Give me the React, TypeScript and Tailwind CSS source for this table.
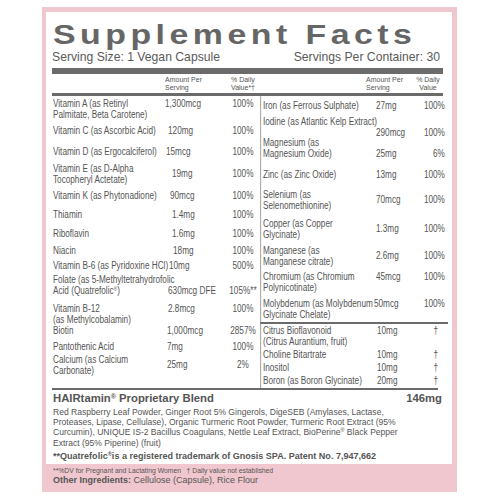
import React from 'react';

// supplement label, two column facts table
const sans = 'font-[Liberation_Sans,Arial,sans-serif]';

interface Row {
    name: React.ReactNode;
    amt: string;
    dv: React.ReactNode;
    h: string;
    al: string;
    ax: string;
}

const reg = <sup className="text-[6px]">®</sup>;

// NOTE: table body is drawn at 1/0.82 width then squeezed, label type is condensed
const leftRows: Row[] = [
    { name: <>Vitamin A (as Retinyl<br />Palmitate, Beta Carotene)</>, amt: '1,300mcg', dv: '100%', h: 'h-[27px]', al: 'self-start', ax: 'pl-0' },
    { name: 'Vitamin C (as Ascorbic Acid)', amt: '120mg', dv: '100%', h: 'h-[21px]', al: 'self-start', ax: 'pl-[3.7px]' },
    { name: 'Vitamin D (as Ergocalciferol)', amt: '15mcg', dv: '100%', h: 'h-[17px]', al: 'self-start', ax: 'pl-[1.2px]' },
    { name: <>Vitamin E (as D-Alpha<br />Tocopheryl Actetate)</>, amt: '19mg', dv: '100%', h: 'h-[27px]', al: 'self-center', ax: 'pl-[8.5px]' },
    { name: 'Vitamin K (as Phytonadione)', amt: '90mcg', dv: '100%', h: 'h-[19px]', al: 'self-start', ax: 'pl-[6.1px]' },
    { name: 'Thiamin', amt: '1.4mg', dv: '100%', h: 'h-[19px]', al: 'self-start', ax: 'pl-[8.5px]' },
    { name: 'Riboflavin', amt: '1.6mg', dv: '100%', h: 'h-[17px]', al: 'self-start', ax: 'pl-[8.5px]' },
    { name: 'Niacin', amt: '18mg', dv: '100%', h: 'h-[15px]', al: 'self-start', ax: 'pl-[9.8px]' },
    { name: 'Vitamin B-6 (as Pyridoxine HCl)', amt: '10mg', dv: '500%', h: 'h-[14px]', al: 'self-start', ax: 'pl-[4.9px]' },
    { name: <>Folate (as 5-Methyltetrahydrofolic<br />Acid (Quatrefolic{reg})</>, amt: '630mcg DFE', dv: <>105%**</>, h: 'h-[29px]', al: 'self-end', ax: 'pl-[3.7px]' },
    { name: <>Vitamin B-12<br />(as Methylcobalamin)</>, amt: '2.8mcg', dv: '100%', h: 'h-[22px]', al: 'self-start', ax: 'pl-[3.7px]' },
    { name: 'Biotin', amt: '1,000mcg', dv: '2857%', h: 'h-[16px]', al: 'self-start', ax: 'pl-[2.4px]' },
    { name: 'Pantothenic Acid', amt: '7mg', dv: '100%', h: 'h-[13px]', al: 'self-start', ax: 'pl-[2.4px]' },
    { name: <>Calcium (as Calcium<br />Carbonate)</>, amt: '25mg', dv: '2%', h: 'h-[24px]', al: 'self-center', ax: 'pl-[2.4px]' },
];

const rightTop: Row[] = [
    { name: 'Iron (as Ferrous Sulphate)', amt: '27mg', dv: '100%', h: 'h-[16px]', al: 'self-start', ax: 'pl-0' },
    { name: <>Iodine (as Atlantic Kelp Extract)<br />&nbsp;</>, amt: '290mcg', dv: '100%', h: 'h-[21px]', al: 'self-end', ax: 'pl-0' },
    { name: <>Magnesium (as<br />Magnesium Oxide)</>, amt: '25mg', dv: '6%', h: 'h-[32px]', al: 'self-end', ax: 'pl-0' },
    { name: 'Zinc (as Zinc Oxide)', amt: '13mg', dv: '100%', h: 'h-[20px]', al: 'self-start', ax: 'pl-0' },
    { name: <>Selenium (as<br />Selenomethionine)</>, amt: '70mcg', dv: '100%', h: 'h-[29px]', al: 'self-center', ax: 'pl-0' },
    { name: <>Copper (as Copper<br />Glycinate)</>, amt: '1.3mg', dv: '100%', h: 'h-[27px]', al: 'self-center', ax: 'pl-0' },
    { name: <>Manganese (as<br />Manganese citrate)</>, amt: '2.6mg', dv: '100%', h: 'h-[26px]', al: 'self-center', ax: 'pl-0' },
    { name: <>Chromium (as Chromium<br />Polynicotinate)</>, amt: '45mcg', dv: '100%', h: 'h-[27px]', al: 'self-start', ax: 'pl-0' },
    { name: <>Molybdenum (as Molybdenum<br />Glycinate Chelate)</>, amt: '50mcg', dv: '100%', h: 'h-[23px]', al: 'self-start', ax: '-ml-[2.4px]' },
];

const rightBottom: Row[] = [
    { name: <>Citrus Bioflavonoid<br />(Citrus Aurantium, fruit)</>, amt: '10mg', dv: '†', h: 'h-[24px]', al: 'self-start', ax: 'pl-[1.2px]' },
    { name: 'Choline Bitartrate', amt: '10mg', dv: '†', h: 'h-[13px]', al: 'self-start', ax: 'pl-[1.2px]' },
    { name: 'Inositol', amt: '10mg', dv: '†', h: 'h-[13px]', al: 'self-start', ax: 'pl-[1.2px]' },
    { name: 'Boron (as Boron Glycinate)', amt: '20mg', dv: '†', h: 'h-[12px]', al: 'self-start', ax: 'pl-[1.2px]' },
];

function LeftRow({ r }: { r: Row }) {
    return (
        <div className={r.h}>
            <div className="grid grid-cols-[136.6px_74.4px_41.5px]">
                <div className="whitespace-nowrap">{r.name}</div>
                <div className={`${r.al} ${r.ax} whitespace-nowrap`}>{r.amt}</div>
                <div className={`${r.al} text-center whitespace-nowrap`}>{r.dv}</div>
            </div>
        </div>
    );
}

function RightRow({ r }: { r: Row }) {
    const dagger = r.dv === '†';
    return (
        <div className={r.h}>
            <div className="grid grid-cols-[137.8px_48.8px_32.9px]">
                <div className="whitespace-nowrap">{r.name}</div>
                <div className={`${r.al} ${r.ax} whitespace-nowrap`}>{r.amt}</div>
                <div className={`${r.al} text-right whitespace-nowrap ${dagger ? 'pr-[6px]' : '-mr-[2.4px]'}`}>{r.dv}</div>
            </div>
        </div>
    );
}

function App() {
    return (
        <div className={`w-[500px] h-[500px] overflow-hidden bg-white pt-[7px] pl-[42px] ${sans} text-[#555]`}>
            <div className="w-[415px] h-[485px] bg-[#f1c7cf] pt-[5px] pl-[4px]">
                <div className="w-[406px] h-[452px] bg-white pl-[6px] pr-[9px] pt-[4px]">
                    {/* title */}
                    <div className="h-[33px] pt-[5px] text-[28px] leading-[28px] font-bold text-[#666] whitespace-nowrap">
                        <span className="inline-block ml-[1px] origin-left scale-x-[1.21] tracking-[3.7px]">Supplement Facts</span>
                    </div>
                    <div className="mt-[1px] h-[14px] flex justify-between text-[12.2px] leading-[14px] pr-[3px] text-[#5a5a5a]">
                        <span>Serving Size: 1 Vegan Capsule</span>
                        <span>Servings Per Container: 30</span>
                    </div>
                    <div className="mt-[4px] h-[6px] bg-[#6b6b6b]" />
                    <div className="h-[18.5px] flex pt-[2px] text-[7px] leading-[7.5px] whitespace-nowrap">
                        <div className="w-[113px]" />
                        <div className="w-[66px]">Amount Per<br />Serving</div>
                        <div className="w-[29px]">% Daily<br />Value*†</div>
                        <div className="w-[106px]" />
                        <div className="w-[47px]">Amount Per<br />Serving</div>
                        <div className="w-[30px] text-center">% Daily<br />Value</div>
                    </div>
                    <div className="h-[3.5px] bg-[#6b6b6b]" />
                    {/* table body */}
                    <div className="h-[292px] w-[391px]">
                        <div className="w-[476.8px] h-full origin-left scale-x-[0.82] flex text-[10px] leading-[10.5px]">
                            <div className="w-[253.7px] pl-[1.2px] pt-[3px] flex flex-col">
                                {leftRows.map((r, i) => <LeftRow key={i} r={r} />)}
                            </div>
                            <div className="w-[223.1px] border-l border-[#8d8d8d] pl-[2.6px] pt-[5px] flex flex-col">
                                {rightTop.map((r, i) => <RightRow key={i} r={r} />)}
                                <div className="h-[2px] bg-[#6b6b6b] -ml-[3.6px] -mr-[6px]" />
                                <div className="mt-[2px]">
                                    {rightBottom.map((r, i) => <RightRow key={i} r={r} />)}
                                </div>
                            </div>
                        </div>
                    </div>
                    <div className="h-[2px] bg-[#6b6b6b] mr-[5px]" />
                    {/* blend */}
                    <div className="mt-[2px] h-[13px] flex justify-between text-[11.3px] leading-[13px] font-bold pl-[1px] pr-[1px]">
                        <span>HAIRtamin<sup className="text-[7px]">®</sup> Proprietary Blend</span>
                        <span>146mg</span>
                    </div>
                    <div className="mt-[2px] pl-[1px] text-[9.5px] leading-[10.2px] whitespace-nowrap">
                        <div className="inline-block origin-left scale-x-[0.9]">
                            Red Raspberry Leaf Powder, Ginger Root 5% Gingerols, DigeSEB (Amylases, Lactase,<br />
                            Proteases, Lipase, Cellulase), Organic Turmeric Root Powder, Turmeric Root Extract (95%<br />
                            Curcumin), UNIQUE IS-2 Bacillus Coagulans, Nettle Leaf Extract, BioPerine<sup className="text-[6px]">®</sup> Black Pepper<br />
                            Extract (95% Piperine) (fruit)
                        </div>
                    </div>
                    <div className="mt-[2.4px] pl-[1px] text-[9.5px] leading-[11px] font-bold whitespace-nowrap">
                        <span className="inline-block origin-left scale-x-[0.95]">
                            **Quatrefolic<sup className="text-[6px]">®</sup>is a registered trademark of Gnosis SPA. Patent No. 7,947,662
                        </span>
                    </div>
                </div>
                {/* footer on pink */}
                <div className="pl-[7px] pt-[4px] whitespace-nowrap">
                    <div className="text-[6.8px] leading-[6.5px]">**%DV for Pregnant and Lactating Women&nbsp;&nbsp;&nbsp;† Daily value not established</div>
                    <div className="text-[9px] leading-[10px]"><b>Other Ingredients:</b> Cellulose (Capsule), Rice Flour</div>
                </div>
            </div>
        </div>
    );
}

export default App;
